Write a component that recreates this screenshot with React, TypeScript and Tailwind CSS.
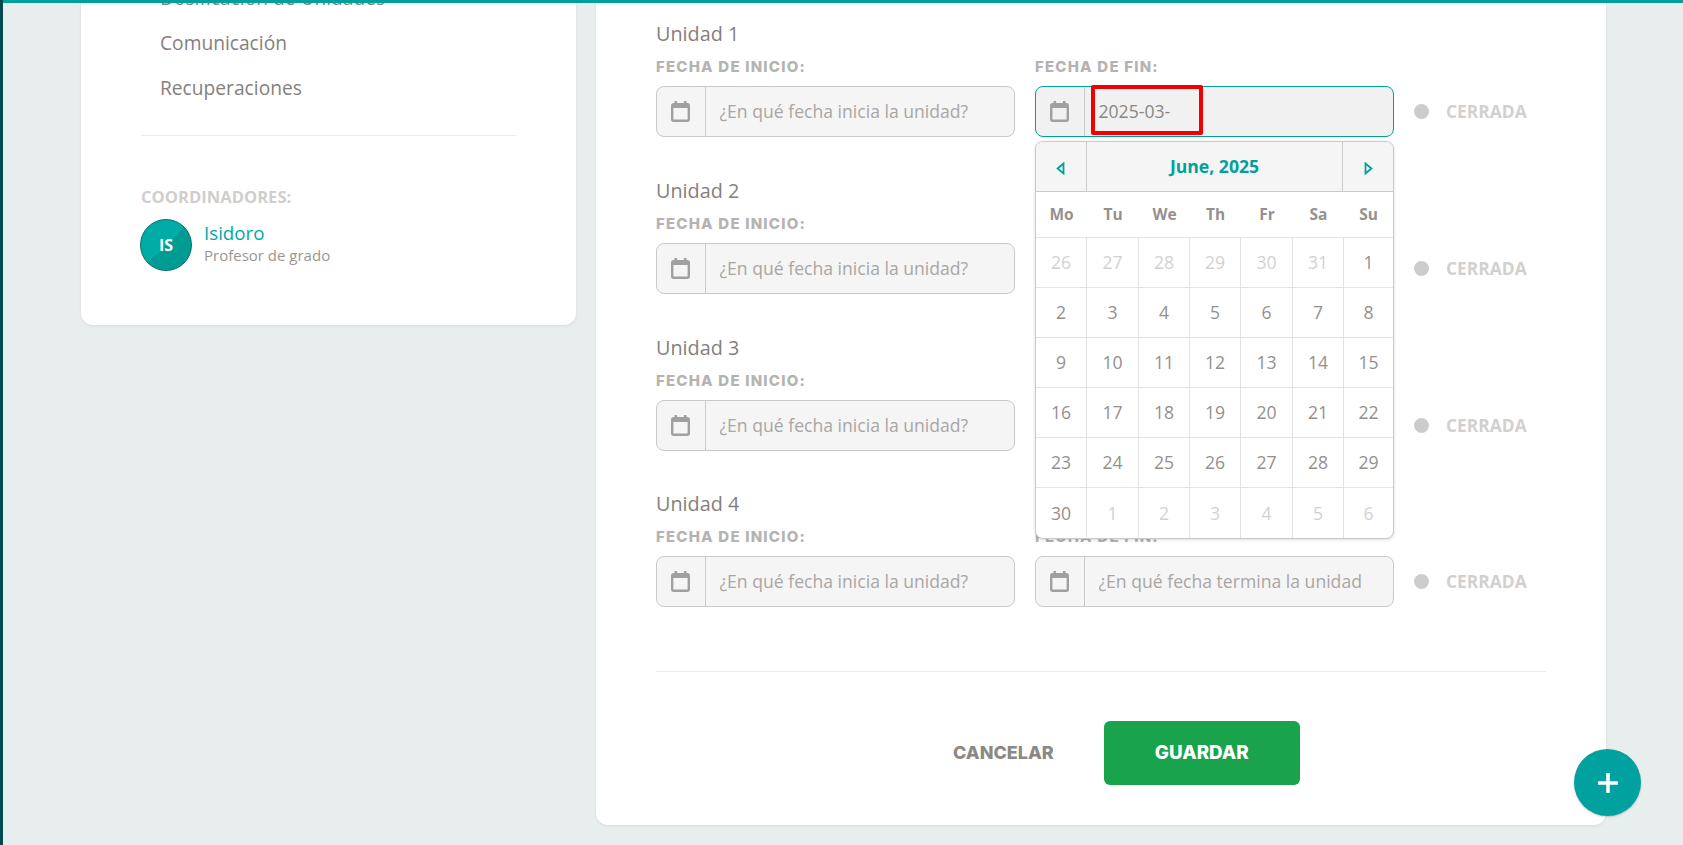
import React from "react";

const openSans = "font-['Open_Sans',sans-serif]";
// Montserrat is not installed, Inter is the nearest wide grotesque
const labelFont = "font-['Inter',sans-serif]";
const fieldLabel = `${labelFont} mb-[10px] h-[18px] text-[15px] leading-[18px] font-extrabold tracking-[1.2px] text-[#b5b3b1]`;
const calendarCols = "grid-cols-[51px_52px_51px_51px_52px_51px_49px]";

const units = ["Unidad 1", "Unidad 2", "Unidad 3", "Unidad 4"];

const calendarDays = [
  [26, 27, 28, 29, 30, 31, 1],
  [2, 3, 4, 5, 6, 7, 8],
  [9, 10, 11, 12, 13, 14, 15],
  [16, 17, 18, 19, 20, 21, 22],
  [23, 24, 25, 26, 27, 28, 29],
  [30, 1, 2, 3, 4, 5, 6],
];

function CalendarIcon() {
  return (
    <svg width="19" height="22" viewBox="0 0 19 22" fill="none">
      <rect x="1.2" y="4.2" width="16.6" height="16.6" rx="1.5" stroke="#a0a0a0" strokeWidth="2.4" />
      <rect x="1" y="4" width="17" height="4" fill="#a0a0a0" />
      <rect x="3.5" y="1" width="2.6" height="4" fill="#a0a0a0" />
      <rect x="12.9" y="1" width="2.6" height="4" fill="#a0a0a0" />
    </svg>
  );
}

function DateField({ placeholder, value, active }: { placeholder: string; value?: string; active?: boolean }) {
  return (
    <div
      className={`flex h-[51px] w-[359px] overflow-hidden rounded-lg border ${
        active ? "border-[#00a19d] bg-[#f1f1f1]" : "border-[#c6caca] bg-[#f5f5f5]"
      }`}
    >
      <div className="flex w-[49px] shrink-0 items-center justify-center border-r border-[#c6caca] pr-[1px] pb-[2px]">
        <CalendarIcon />
      </div>
      <input
        readOnly
        value={value}
        placeholder={placeholder}
        className={`${openSans} min-w-0 flex-1 bg-transparent pr-8 pl-[13.5px] text-[17.6px] text-[#8a8683] outline-none placeholder:text-[#a9a6a4]`}
      />
    </div>
  );
}

function UnitRow({ title, index }: { title: string; index: number }) {
  // the open calendar lies over the end date of units 2 and 3
  const covered = index === 1 || index === 2;
  return (
    <div className={index === 2 ? "h-[156px]" : "h-[157px]"}>
      <div className={`${openSans} h-[46px] pt-[9px] text-[19.8px] leading-[26px] text-[#85807d]`}>{title}</div>
      <div className="flex items-start gap-[20px]">
        <div>
          <div className={fieldLabel}>FECHA DE INICIO:</div>
          <DateField placeholder="¿En qué fecha inicia la unidad?" />
        </div>
        <div className="relative">
          <div className={covered ? "invisible" : ""}>
            <div className={fieldLabel}>FECHA DE FIN:</div>
            <DateField
              placeholder="¿En qué fecha termina la unidad?"
              value={index === 0 ? "2025-03-" : undefined}
              active={index === 0}
            />
          </div>
          {index === 0 && (
            <>
              {/* red highlight annotation on top of the typed value */}
              <div className="absolute top-[27px] left-[56px] z-20 h-[50px] w-[112px] rounded-[2px] border-[4px] border-[#f00000]" />
              <DatePopup />
            </>
          )}
        </div>
        <div className="mt-[28px] flex h-[51px] items-center">
          <span className="h-[15px] w-[15px] rounded-full bg-[#cccccc]" />
          <span className={`${openSans} ml-[17px] text-[17.4px] font-bold text-[#d2d0cf]`}>CERRADA</span>
        </div>
      </div>
    </div>
  );
}

function DatePopup() {
  return (
    <div className={`${openSans} absolute top-[83px] left-0 z-10 w-[359px] overflow-hidden rounded-lg border border-[#c6caca] bg-white shadow-[0_1px_3px_rgba(0,0,0,0.15)]`}>
      <div className="flex h-[50px] border-b border-[#c6caca] bg-[#f5f5f5]">
        <div className="flex w-[51px] items-center justify-center border-r border-[#c6caca] pt-[3px] pr-[2px]">
          <svg width="9" height="13" viewBox="0 0 9 13" fill="none">
            <path d="M7.5 1.5 L1.6 6.5 L7.5 11.5 Z" stroke="#00a19d" strokeWidth="1.8" />
          </svg>
        </div>
        <div className="flex flex-1 items-center justify-center text-[17.6px] font-bold text-[#00a19d]">June, 2025</div>
        <div className="flex w-[51px] items-center justify-center border-l border-[#c6caca] pt-[3px]">
          <svg width="9" height="13" viewBox="0 0 9 13" fill="none">
            <path d="M1.5 1.5 L7.4 6.5 L1.5 11.5 Z" stroke="#00a19d" strokeWidth="1.8" />
          </svg>
        </div>
      </div>
      <div className={`grid h-[46px] ${calendarCols} border-b border-[#e3e3e3]`}>
        {["Mo", "Tu", "We", "Th", "Fr", "Sa", "Su"].map((d) => (
          <div key={d} className="flex items-center justify-center text-[15.5px] font-bold text-[#94908e]">
            {d}
          </div>
        ))}
      </div>
      {calendarDays.map((week, w) => (
        <div key={w} className={`grid h-[50px] ${calendarCols} border-b border-[#e3e3e3] last:border-b-0`}>
          {week.map((day, i) => {
            const muted = (w === 0 && day > 7) || (w === 5 && day < 7);
            return (
              <div
                key={i}
                className={`flex items-center justify-center border-r border-[#e3e3e3] text-[17.6px] last:border-r-0 ${
                  muted ? "text-[#d3d1d0]" : "text-[#94908e]"
                }`}
              >
                {day}
              </div>
            );
          })}
        </div>
      ))}
    </div>
  );
}

export default function App() {
  return (
    <div className="relative h-[845px] overflow-hidden border-l-[3px] border-[#004a4f] bg-[#e8eeee]">
      {/* top progress strip stays over the scrolled page */}
      <div className="absolute top-0 right-0 left-0 z-30 h-[3px] bg-[#00a19d]" />

      <div className="-mt-[20px] flex items-start gap-[20px] pr-[77px] pl-[78px]">
        {/* Sidebar */}
        <aside className={`${openSans} h-[345px] w-[495px] shrink-0 rounded-b-xl bg-white px-[60px] shadow-[0_1px_3px_rgba(0,0,0,0.08)]`}>
          <div className="-mt-[5px] text-[19.2px] leading-[45px] text-[#85807d]">
            <div className="pl-[19px]">Dosificación de Unidades</div>
            <div className="pl-[19px]">Comunicación</div>
            <div className="pl-[19px]">Recuperaciones</div>
          </div>
          <div className="mt-[25px] border-t border-[#ebebeb]" />
          <div className="mt-[51px] text-[16.6px] leading-5 font-bold text-[#d0cecd]">COORDINADORES:</div>
          <div className="mt-[12px] -ml-[1px] flex items-center gap-[12px]">
            <div className="flex h-[52px] w-[52px] items-center justify-center rounded-full border border-[#00716c] bg-[linear-gradient(135deg,#00aca5_50%,#009c93_50%)] text-[16px] font-bold text-white">
              IS
            </div>
            <div className="pb-[5px]">
              <div className="text-[18.7px] leading-[25px] text-[#00a8ad]">Isidoro</div>
              <div className="text-[15px] leading-[20px] text-[#9a9693]">Profesor de grado</div>
            </div>
          </div>
        </aside>

        {/* Units form */}
        <main className="h-[845px] w-[1010px] shrink-0 rounded-b-xl bg-white px-[60px] pt-[32px] shadow-[0_1px_3px_rgba(0,0,0,0.08)]">
          {units.map((u, i) => (
            <UnitRow key={u} title={u} index={i} />
          ))}
          <div className="mt-[32px] border-t border-[#ebebeb]" />
          <div className="mt-[49px] flex items-center">
            <button className={`${labelFont} ml-[297px] pb-[1px] text-[18px] font-extrabold text-[#8c8885]`}>CANCELAR</button>
            <button className={`${labelFont} ml-[50px] h-[64px] w-[196px] rounded-md bg-[#19a34d] text-[18.8px] font-extrabold text-white`}>GUARDAR</button>
          </div>
        </main>
      </div>

      <button className="absolute top-[749px] left-[1571px] z-30 flex h-[67px] w-[67px] items-center justify-center rounded-full bg-[#00a19f] shadow-[0_1px_2px_rgba(0,0,0,0.2)]">
        <svg width="22" height="22" viewBox="0 0 22 22">
          <rect x="9.25" y="1" width="3.5" height="20" fill="#fff" />
          <rect x="1" y="9.25" width="20" height="3.5" fill="#fff" />
        </svg>
      </button>
    </div>
  );
}
